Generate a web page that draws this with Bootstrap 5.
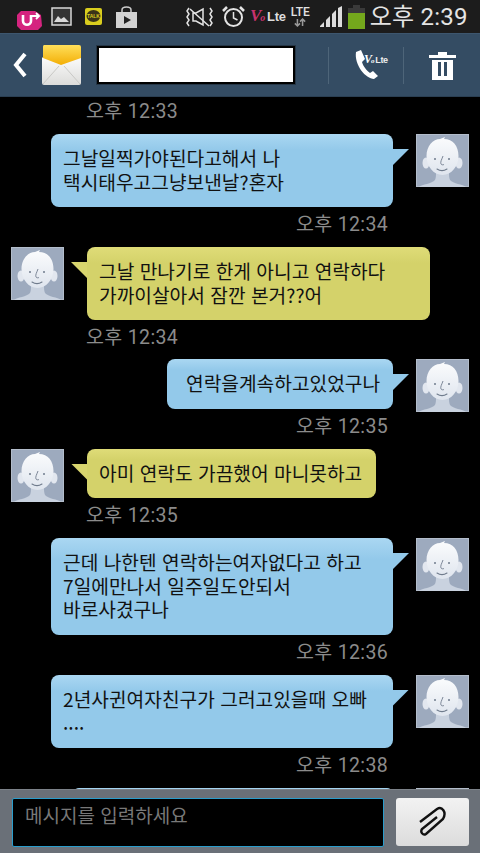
<!DOCTYPE html>
<html lang="ko">
<head>
<meta charset="utf-8">
<title>메시지</title>
<link href="https://cdn.jsdelivr.net/npm/bootstrap@5.3.0/dist/css/bootstrap.min.css" rel="stylesheet">
<style>
html,body{margin:0;height:853px;background:#000;overflow:hidden}
.phone{width:480px;height:853px;font-family:"Noto Sans CJK KR","Noto Sans",sans-serif}
.statusbar{height:33px;background:#1c1c1c;flex:none;padding-left:17px}
.clock{font-family:Roboto,"Noto Sans CJK KR",sans-serif;font-size:24px;color:#e4e4e4;line-height:30px;margin-left:5px;letter-spacing:.2px;white-space:nowrap}
.sb-gap-a{margin-left:9px}.sb-gap-b{margin-left:13px}.sb-gap-c{margin-left:14px}.sb-gap-d{margin-left:49px}.sb-gap-e{margin-left:9px}.sb-gap-f{margin-left:5px}.sb-gap-g{margin-left:5px}.sb-gap-h{margin-left:10px}.sb-gap-i{margin-left:6px}
.apptop{height:64px;background:#344c63;border-top:1px solid #3d566e;border-bottom:1px solid #2b3f52;flex:none;padding-left:13px}
.envgap{margin-left:13px}
.namebox{width:198px;height:38px;background:#fff;border:2px solid #000;outline:1px solid #253646;margin-left:15px}
.vline{width:1px;height:37px;background:#4e6579}
.vline-a{margin-left:33px}.vline-b{margin-left:18px}
.callwrap{position:relative;width:32px;height:32px;flex:none;margin-left:24px}
.trashgap{margin-left:25px}
.chatlist{flex:1 1 auto;overflow:hidden;background:#000;min-height:0}
.stamp{font-family:Roboto,"Noto Sans CJK KR",sans-serif;font-size:19.5px;color:#8b8b8b;height:40px;line-height:35px;letter-spacing:.35px;white-space:nowrap}
.stamp-top{height:37px;line-height:30px;padding-left:86px}
.stamp-me{text-align:right;padding-right:92px}
.stamp-you{padding-left:86px}
.stamp-short{height:39px}
.msg{display:flex;align-items:flex-start}
.msg-me{justify-content:flex-end;padding-right:11px}
.msg-you{padding-left:11px}
.face{width:53px;height:53px;flex:none;display:block;margin-bottom:-4px}
.bub{position:relative;font-size:19.2px;line-height:23.5px;color:#111;padding:13px 12px;border-radius:8px;white-space:nowrap}
.bub-me{background:linear-gradient(#aad7f2,#93c9ea 22%);margin-right:23px}
.bub-you{background:linear-gradient(#dfdc78,#d4d26a 22%);margin-left:23px}
.bub-me::after,.bub-you::after{content:"";position:absolute;top:15px;width:16px;height:16px}
.bub-me::after{left:100%;background:#93c9ea;clip-path:polygon(0 0,100% 0,0 100%)}
.bub-you::after{right:100%;background:#d8d56e;clip-path:polygon(0 0,100% 0,100% 100%)}
.w342{width:342px}.w343{width:343px}.w226{width:226px}.w289{width:289px}
.pad-l{padding-left:19px}
.bub-tail-cut{width:320px;height:8px;padding:0;border-radius:6px 6px 0 0}
.bottombar{height:64px;background:#6a7078;border-top:1px solid #7b8188;flex:none;padding:8px 11px 6px 12px}
.inputbox{width:372px;height:49px;background:#000;border:1px solid #2a9dcc;border-radius:2px;color:#787878;font-size:19px;padding:0 12px 16px;outline:0}
.inputbox::placeholder{color:#787878;opacity:1}
.clipbtn{width:73px;height:48px;background:linear-gradient(#f2f2f2,#dcdcdc);border:0;border-radius:3px;padding:0}
.clipbtn:hover,.clipbtn:active{background:linear-gradient(#f2f2f2,#dcdcdc)}
.uplus{width:25px;height:21px;flex:none}
.ltemini{font-family:Roboto,sans-serif;font-weight:500;font-size:12px;line-height:11px;color:#e2e2e2}
.vlogo{font-family:"Liberation Sans",sans-serif;font-weight:700;font-size:13px;color:#ddd;letter-spacing:-.3px;line-height:16px;white-space:nowrap}
.vlogo i{color:#c8326e;font-family:"Liberation Serif",serif;font-size:17px;letter-spacing:-1px}
.vlogo b{color:#c8326e;font-family:"Liberation Serif",serif;font-style:italic;font-size:10px;margin-right:2px}
.vlogo-w{font-size:9px;color:#eee;position:absolute;left:11px;top:2px}
.vlogo-w i{color:#fff;font-size:12px}
.vlogo-w b{color:#fff;font-size:7px;margin-right:1px}
</style>
</head>
<body>
<svg width="0" height="0" class="d-block position-absolute">
 <defs>
  <linearGradient id="skin" x1="0" y1="0" x2="0" y2="1"><stop offset="0" stop-color="#fbfcfd"/><stop offset="1" stop-color="#dfe5ee"/></linearGradient>
  <symbol id="person" viewBox="0 0 53 53">
   <rect width="53" height="53" fill="#9daabe"/>
   <rect x=".5" y=".5" width="52" height="52" fill="none" stroke="#b3bdcb"/>
   <path d="M3 53c3-3 13-3 16-7 1-2 1-5 1-8h13c0 3 0 6 1 8 3 4 13 4 16 7z" fill="#c9d2df"/>
   <ellipse cx="10" cy="29" rx="3.500" ry="5.500" fill="#e2e7ef"/>
   <ellipse cx="43" cy="29" rx="3.500" ry="5.500" fill="#e2e7ef"/>
   <path d="M10.500 22C10.500 12 17 5 24 5l5-2-1 2c9 0 14.500 7 14.500 17 0 10-7 19-16 19s-16-9-16-19z" fill="url(#skin)"/>
   <circle cx="19" cy="25" r="1" fill="#6f7b8c"/><circle cx="33" cy="25" r="1" fill="#6f7b8c"/>
   <path d="M27 22c-1 3-3 6-2 8 .5 1 2 1 3 .5" fill="none" stroke="#6f7b8c" stroke-width=".9"/>
   <path d="M21 35c3 2 7 2 10 0" fill="none" stroke="#6f7b8c" stroke-width="1.100" stroke-linecap="round"/>
  </symbol>
 </defs>
</svg>
<div class="phone d-flex flex-column">
 <div class="statusbar d-flex align-items-center">
  <div class="uplus">
   <svg width="25" height="21" viewBox="0 0 25 21"><path d="M4 1h14l6 4 1 11-4 4H4l-4-4V5z" fill="#d5247f"/><path d="M6 5v6c0 5 8 5 8 0V5" fill="none" stroke="#fff" stroke-width="2.600"/><path d="M15 6h6M19 3l3 3-3 3" fill="none" stroke="#fff" stroke-width="1.800"/></svg>
  </div>
  <svg class="sb-gap-a" width="21" height="19" viewBox="0 0 21 19"><rect x="1" y="1" width="19" height="17" fill="#333" stroke="#d8d8d8" stroke-width="1.500"/><path d="M3 15l4-6 3 3 3-2 5 5z" fill="#d8d8d8"/></svg>
  <svg class="sb-gap-b" width="17" height="17" viewBox="0 0 17 17"><rect width="17" height="17" rx="2" fill="#d9cd1e"/><ellipse cx="8.500" cy="8" rx="7" ry="6" fill="#3a3318"/><text x="8.500" y="10" text-anchor="middle" font-size="5" font-weight="700" font-family="Liberation Sans" fill="#d9cd1e">TALK</text></svg>
  <svg class="sb-gap-c" width="21" height="22" viewBox="0 0 21 22"><path d="M6 7V4c0-4 9-4 9 0v3" fill="none" stroke="#ccc" stroke-width="1.500"/><path d="M0 6h21v16H0z" fill="#d2d2d2"/><path d="M8 10l7 4-7 4z" fill="#222"/></svg>
  <svg class="sb-gap-d" width="27" height="20" viewBox="0 0 27 20"><path d="M7 6h3l7-4v16l-7-4H7z" fill="none" stroke="#e4e4e4" stroke-width="1.500"/><path d="M3 1l-2 3 2 3-2 3 2 3-2 3 2 3M24 1l2 3-2 3 2 3-2 3 2 3-2 3M4 2l19 17" fill="none" stroke="#e4e4e4" stroke-width="1.500"/></svg>
  <svg class="sb-gap-e" width="23" height="23" viewBox="0 0 23 23"><circle cx="11.500" cy="12.500" r="8.500" fill="none" stroke="#e4e4e4" stroke-width="2"/><path d="M11.500 7v6l4 2" fill="none" stroke="#e4e4e4" stroke-width="1.500"/><path d="M1 6l4-4M22 6l-4-4" stroke="#e4e4e4" stroke-width="2.500"/></svg>
  <span class="vlogo sb-gap-f"><i>V</i><b>o</b>Lte</span>
  <div class="ltemini sb-gap-g text-center">LTE<svg class="d-block mx-auto" width="12" height="9" viewBox="0 0 14 10"><path d="M4 1v8M1 6l3 3 3-3M10 9V1M7 4l3-3 3 3" fill="none" stroke="#999" stroke-width="1.800"/></svg></div>
  <svg class="sb-gap-h" width="22" height="22" viewBox="0 0 22 22"><path d="M0 20l4-4v5H0zM6 14l4-4v11H6zM12 8l4-4v17h-4zM18 2l4-2v21h-4z" fill="#dcdcdc"/></svg>
  <svg class="sb-gap-i" width="17" height="24" viewBox="0 0 17 24"><path d="M5 0h7v3h5v21H0V3h5z" fill="#3a3a3a"/><rect y="8" width="17" height="16" fill="#74a81c"/></svg>
  <span class="clock">오후 2:39</span>
 </div>

 <div class="apptop d-flex align-items-center">
  <svg width="15" height="26" viewBox="0 0 15 26"><path d="M12 2L3 13l9 11" fill="none" stroke="#fff" stroke-width="4"/></svg>
  <svg class="envgap" width="41" height="41" viewBox="0 0 41 41">
   <defs>
    <linearGradient id="envY" x1="0" y1="0" x2="0" y2="1"><stop offset="0" stop-color="#ffdf5a"/><stop offset="1" stop-color="#f3ae05"/></linearGradient>
    <linearGradient id="envW" x1="0" y1="0" x2="0" y2="1"><stop offset="0" stop-color="#fbfbfb"/><stop offset="1" stop-color="#dcdcda"/></linearGradient>
   </defs>
   <path d="M2 12h37a1 1 0 0 1 1 1v25a2 2 0 0 1-2 2H3a2 2 0 0 1-2-2V13z" fill="url(#envW)"/>
   <path d="M2 39l16-18M39 39L23 21" fill="none" stroke="#c9c9c6"/>
   <path d="M3 0h35a2 2 0 0 1 2 2v11L20 20 2 13V2a2 2 0 0 1 1-2z" fill="url(#envY)"/>
  </svg>
  <div class="namebox"></div>
  <div class="vline vline-a"></div>
  <div class="callwrap">
   <svg width="32" height="32" viewBox="0 0 32 32"><path d="M3 3L8 1l4 9-3 3c1 4 5 9 8 11l3-2 5 5-4 3C13 30 1 16 3 3z" fill="#fff"/></svg>
   <span class="vlogo vlogo-w"><i>V</i><b>o</b>Lte</span>
  </div>
  <div class="vline vline-b"></div>
  <svg class="trashgap" width="27" height="29" viewBox="0 0 27 29"><path d="M0 4h9V1h9v3h9v3H0zM3 9h21v20H3z" fill="#fff"/><path d="M9 11h3v14H9zM15 11h3v14h-3z" fill="#344c63"/></svg>
 </div>

 <div class="chatlist">
  <div class="stamp stamp-top">오후 12:33</div>

  <div class="msg msg-me"><div class="bub bub-me w342">그날일찍가야된다고해서 나<br>택시태우고그냥보낸날?혼자</div><svg class="face"><use href="#person"/></svg></div>
  <div class="stamp stamp-me">오후 12:34</div>

  <div class="msg msg-you"><svg class="face"><use href="#person"/></svg><div class="bub bub-you w343">그날 만나기로 한게 아니고 연락하다<br>가까이살아서 잠깐 본거??어</div></div>
  <div class="stamp stamp-you stamp-short">오후 12:34</div>

  <div class="msg msg-me"><div class="bub bub-me w226 pad-l">연락을계속하고있었구나</div><svg class="face"><use href="#person"/></svg></div>
  <div class="stamp stamp-me">오후 12:35</div>

  <div class="msg msg-you"><svg class="face"><use href="#person"/></svg><div class="bub bub-you w289">아미 연락도 가끔했어 마니못하고</div></div>
  <div class="stamp stamp-you">오후 12:35</div>

  <div class="msg msg-me"><div class="bub bub-me w342">근데 나한텐 연락하는여자없다고 하고<br>7일에만나서 일주일도안되서<br>바로사겼구나</div><svg class="face"><use href="#person"/></svg></div>
  <div class="stamp stamp-me">오후 12:36</div>

  <div class="msg msg-me"><div class="bub bub-me w342">2년사귄여자친구가 그러고있을때 오빠<br>....</div><svg class="face"><use href="#person"/></svg></div>
  <div class="stamp stamp-me">오후 12:38</div>

  <div class="msg msg-me"><div class="bub bub-me bub-tail-cut"></div><svg class="face"><use href="#person"/></svg></div>
 </div>

 <div class="bottombar d-flex justify-content-between">
  <input class="inputbox d-block" type="text" placeholder="메시지를 입력하세요" aria-label="메시지">
  <button class="btn clipbtn d-flex align-items-center justify-content-center" type="button" aria-label="첨부">
   <svg width="28" height="32" viewBox="0 0 28 32"><path d="M1 16L18 3c5-3 10 3 6 10L7 28c-3 2-6-2-4-5L18 11" fill="none" stroke="#111" stroke-width="2.400"/></svg>
  </button>
 </div>
</div>
</body>
</html>
